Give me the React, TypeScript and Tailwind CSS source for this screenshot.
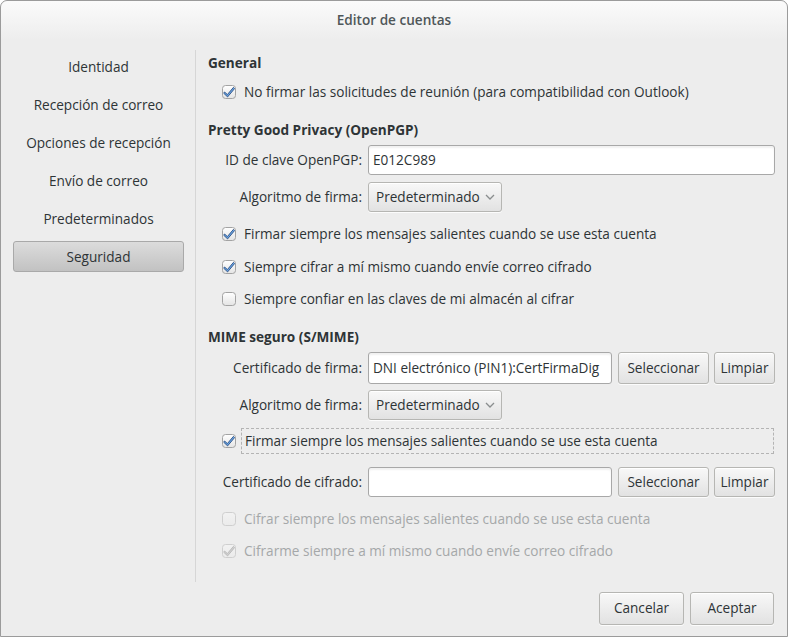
import React from "react";

const font = { fontFamily: '"Open Sans", "Noto Sans", sans-serif' };

function Check({ checked, disabled }: { checked?: boolean; disabled?: boolean }) {
  return (
    <svg width="16" height="16" viewBox="0 0 16 16" className="shrink-0">
      <defs>
        <linearGradient id={disabled ? "cbgd" : "cbg"} x1="0" y1="0" x2="0" y2="1">
          <stop offset="0" stopColor={disabled ? "#f2f2f2" : "#ffffff"} />
          <stop offset="1" stopColor={disabled ? "#ebebeb" : "#e4e4e4"} />
        </linearGradient>
      </defs>
      <rect
        x="1.5"
        y="1.5"
        width="13"
        height="13"
        rx="3"
        fill={`url(#${disabled ? "cbgd" : "cbg"})`}
        stroke={disabled ? "#cfcfcf" : "#a3a3a3"}
      />
      {checked && (
        <path
          d="M3.6 8.0 L6.4 10.6 L12.4 3.4 L13.6 4.6 L6.6 12.9 L2.7 9.2 Z"
          fill={disabled ? "#d0d0d0" : "#6aa6e8"}
          stroke={disabled ? "#b8b8b8" : "#2d4f80"}
          strokeWidth="0.9"
          strokeLinejoin="round"
        />
      )}
    </svg>
  );
}

function CheckRow({
  label,
  checked,
  disabled,
  focus,
  mt,
  h = "h-[24px]",
}: {
  label: string;
  checked?: boolean;
  disabled?: boolean;
  focus?: boolean;
  mt: string;
  h?: string;
}) {
  return (
    <div className={`flex items-center pl-[13px] ${h} ${mt}`}>
      <Check checked={checked} disabled={disabled} />
      {focus ? (
        <span className="ml-[4px] flex-1 mr-[1px] h-[26px] flex items-center pl-[3px] pt-[1px] border border-dashed border-[#b4b4b4]">
          {label}
        </span>
      ) : (
        <span className={`ml-[7px] pt-[1px] ${disabled ? "text-[#a5a8a9]" : ""}`}>{label}</span>
      )}
    </div>
  );
}

function Btn({ children, className = "" }: { children: React.ReactNode; className?: string }) {
  return (
    <div
      className={`flex items-center justify-center rounded-[3px] border border-[#b6b6b3] bg-gradient-to-b from-[#f8f8f8] to-[#e2e2e2] shadow-[inset_0_1px_0_#ffffff,0_1px_0_rgba(255,255,255,0.8)] ${className}`}
    >
      {children}
    </div>
  );
}

function Combo() {
  return (
    <Btn className="w-[134px] h-[30px] justify-start pl-[7px] gap-[5px]">
      <span>Predeterminado</span>
      <svg width="10" height="8" viewBox="0 0 10 8">
        <path d="M1 2 L5 6 L9 2" fill="none" stroke="#8a8d8e" strokeWidth="1.3" />
      </svg>
    </Btn>
  );
}

function Input({ value, className = "" }: { value?: string; className?: string }) {
  return (
    <div
      className={`h-[30px] rounded-[3px] border border-[#a8a8a8] bg-white shadow-[inset_0_2px_2px_rgba(0,0,0,0.06)] flex items-center pl-[4px] overflow-hidden whitespace-nowrap ${className}`}
    >
      {value}
    </div>
  );
}

function Label({ children }: { children: React.ReactNode }) {
  return <div className="w-[160px] text-right pr-[6px] shrink-0">{children}</div>;
}

export default function App() {
  const sideItems = [
    "Identidad",
    "Recepción de correo",
    "Opciones de recepción",
    "Envío de correo",
    "Predeterminados",
  ];
  return (
    <div
      className="w-[788px] h-[637px] bg-[#ededed] text-[#2e3436] text-[13.6px] border border-[#9b9b9b] rounded-t-[7px] flex flex-col overflow-hidden"
      style={font}
    >
      <div className="h-[39px] shrink-0 flex items-center justify-center bg-gradient-to-b from-[#fbfbfb] to-[#ededed] rounded-t-[7px]">
        <span className="font-semibold text-[#4f5759] text-[13.6px] pb-[1px]">Editor de cuentas</span>
      </div>
      <div className="flex flex-1 pt-[10px]">
        <div className="w-[195px] h-[532px] border-r border-[#d6d6d6] shrink-0 pl-[12px] pr-[11px] pt-[1px] flex flex-col gap-[8px]">
          {sideItems.map((s) => (
            <div key={s} className="h-[30px] pt-[2px] flex items-center justify-center">
              {s}
            </div>
          ))}
          <div className="h-[31px] pt-[1px] flex items-center justify-center rounded-[3px] border border-[#a9a9a9] bg-gradient-to-b from-[#dcdcdc] to-[#c2c2c2]">
            Seguridad
          </div>
        </div>
        <div className="flex-1 pl-[12px] pr-[12px] flex flex-col">
          <div className="h-[20px] mt-[3px] flex items-center font-bold">General</div>
          <CheckRow mt="mt-[7px]" checked label="No firmar las solicitudes de reunión (para compatibilidad con Outlook)" />
          <div className="h-[20px] mt-[16px] flex items-center font-bold">Pretty Good Privacy (OpenPGP)</div>
          <div className="flex items-center mt-[5px]">
            <Label>ID de clave OpenPGP:</Label>
            <Input value="E012C989" className="flex-1" />
          </div>
          <div className="flex items-center mt-[7px]">
            <Label>Algoritmo de firma:</Label>
            <Combo />
          </div>
          <CheckRow mt="mt-[10px]" checked label="Firmar siempre los mensajes salientes cuando se use esta cuenta" />
          <CheckRow mt="mt-[9px]" checked label="Siempre cifrar a mí mismo cuando envíe correo cifrado" />
          <CheckRow mt="mt-[8px]" label="Siempre confiar en las claves de mi almacén al cifrar" />
          <div className="h-[20px] mt-[16px] flex items-center font-bold">MIME seguro (S/MIME)</div>
          <div className="flex items-center mt-[5px] h-[32px]">
            <Label>Certificado de firma:</Label>
            <Input value="DNI electrónico (PIN1):CertFirmaDig" className="w-[244px] h-[32px]" />
            <Btn className="w-[91px] h-[32px] ml-[6px]">Seleccionar</Btn>
            <Btn className="w-[61px] h-[32px] ml-[5px]">Limpiar</Btn>
          </div>
          <div className="flex items-center mt-[6px]">
            <Label>Algoritmo de firma:</Label>
            <Combo />
          </div>
          <CheckRow
            mt="mt-[8px]"
            h="h-[26px]"
            checked
            focus
            label="Firmar siempre los mensajes salientes cuando se use esta cuenta"
          />
          <div className="flex items-center mt-[13px]">
            <Label>Certificado de cifrado:</Label>
            <Input className="w-[244px]" />
            <Btn className="w-[91px] h-[30px] ml-[6px]">Seleccionar</Btn>
            <Btn className="w-[61px] h-[30px] ml-[5px]">Limpiar</Btn>
          </div>
          <CheckRow mt="mt-[10px]" disabled label="Cifrar siempre los mensajes salientes cuando se use esta cuenta" />
          <CheckRow mt="mt-[8px]" disabled checked label="Cifrarme siempre a mí mismo cuando envíe correo cifrado" />
        </div>
      </div>
      <div className="h-[54px] shrink-0 flex justify-end items-start pt-[10px] pr-[13px] gap-[6px]">
        <Btn className="w-[85px] h-[33px]">Cancelar</Btn>
        <Btn className="w-[84px] h-[33px]">Aceptar</Btn>
      </div>
    </div>
  );
}
